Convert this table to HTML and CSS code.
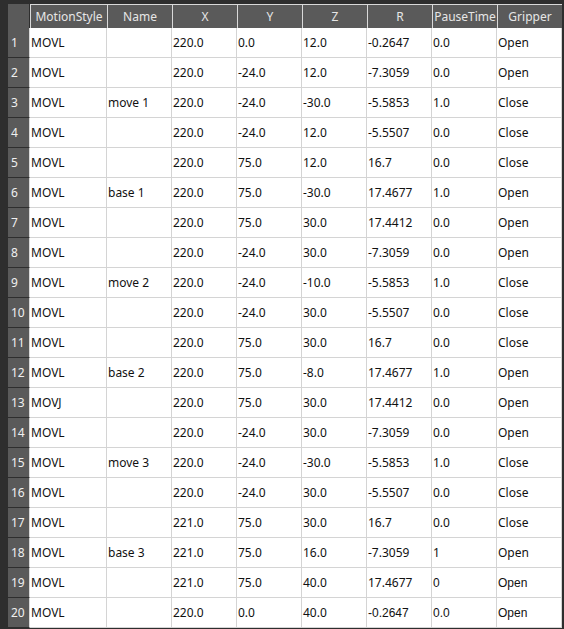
FILE: index.html
```html
<!DOCTYPE html>
<html>
<head>
<meta charset="utf-8">
<link rel="stylesheet" href="styles.css">
</head>
<body>
<div class="wrap">
  <div class="grid" id="grid">
    <div class="corner"></div>
    <div class="hd">MotionStyle</div>
    <div class="hd">Name</div>
    <div class="hd">X</div>
    <div class="hd">Y</div>
    <div class="hd">Z</div>
    <div class="hd">R</div>
    <div class="hd">PauseTime</div>
    <div class="hd">Gripper</div>

    <div class="rh">1</div><div class="c">MOVL</div><div class="c"></div><div class="c">220.0</div><div class="c">0.0</div><div class="c">12.0</div><div class="c">-0.2647</div><div class="c">0.0</div><div class="c">Open</div>
    <div class="rh">2</div><div class="c">MOVL</div><div class="c"></div><div class="c">220.0</div><div class="c">-24.0</div><div class="c">12.0</div><div class="c">-7.3059</div><div class="c">0.0</div><div class="c">Open</div>
    <div class="rh">3</div><div class="c">MOVL</div><div class="c">move 1</div><div class="c">220.0</div><div class="c">-24.0</div><div class="c">-30.0</div><div class="c">-5.5853</div><div class="c">1.0</div><div class="c">Close</div>
    <div class="rh">4</div><div class="c">MOVL</div><div class="c"></div><div class="c">220.0</div><div class="c">-24.0</div><div class="c">12.0</div><div class="c">-5.5507</div><div class="c">0.0</div><div class="c">Close</div>
    <div class="rh">5</div><div class="c">MOVL</div><div class="c"></div><div class="c">220.0</div><div class="c">75.0</div><div class="c">12.0</div><div class="c">16.7</div><div class="c">0.0</div><div class="c">Close</div>
    <div class="rh">6</div><div class="c">MOVL</div><div class="c">base 1</div><div class="c">220.0</div><div class="c">75.0</div><div class="c">-30.0</div><div class="c">17.4677</div><div class="c">1.0</div><div class="c">Open</div>
    <div class="rh">7</div><div class="c">MOVL</div><div class="c"></div><div class="c">220.0</div><div class="c">75.0</div><div class="c">30.0</div><div class="c">17.4412</div><div class="c">0.0</div><div class="c">Open</div>
    <div class="rh">8</div><div class="c">MOVL</div><div class="c"></div><div class="c">220.0</div><div class="c">-24.0</div><div class="c">30.0</div><div class="c">-7.3059</div><div class="c">0.0</div><div class="c">Open</div>
    <div class="rh">9</div><div class="c">MOVL</div><div class="c">move 2</div><div class="c">220.0</div><div class="c">-24.0</div><div class="c">-10.0</div><div class="c">-5.5853</div><div class="c">1.0</div><div class="c">Close</div>
    <div class="rh">10</div><div class="c">MOVL</div><div class="c"></div><div class="c">220.0</div><div class="c">-24.0</div><div class="c">30.0</div><div class="c">-5.5507</div><div class="c">0.0</div><div class="c">Close</div>
    <div class="rh">11</div><div class="c">MOVL</div><div class="c"></div><div class="c">220.0</div><div class="c">75.0</div><div class="c">30.0</div><div class="c">16.7</div><div class="c">0.0</div><div class="c">Close</div>
    <div class="rh">12</div><div class="c">MOVL</div><div class="c">base 2</div><div class="c">220.0</div><div class="c">75.0</div><div class="c">-8.0</div><div class="c">17.4677</div><div class="c">1.0</div><div class="c">Open</div>
    <div class="rh">13</div><div class="c">MOVJ</div><div class="c"></div><div class="c">220.0</div><div class="c">75.0</div><div class="c">30.0</div><div class="c">17.4412</div><div class="c">0.0</div><div class="c">Open</div>
    <div class="rh">14</div><div class="c">MOVL</div><div class="c"></div><div class="c">220.0</div><div class="c">-24.0</div><div class="c">30.0</div><div class="c">-7.3059</div><div class="c">0.0</div><div class="c">Open</div>
    <div class="rh">15</div><div class="c">MOVL</div><div class="c">move 3</div><div class="c">220.0</div><div class="c">-24.0</div><div class="c">-30.0</div><div class="c">-5.5853</div><div class="c">1.0</div><div class="c">Close</div>
    <div class="rh">16</div><div class="c">MOVL</div><div class="c"></div><div class="c">220.0</div><div class="c">-24.0</div><div class="c">30.0</div><div class="c">-5.5507</div><div class="c">0.0</div><div class="c">Close</div>
    <div class="rh">17</div><div class="c">MOVL</div><div class="c"></div><div class="c">221.0</div><div class="c">75.0</div><div class="c">30.0</div><div class="c">16.7</div><div class="c">0.0</div><div class="c">Close</div>
    <div class="rh">18</div><div class="c">MOVL</div><div class="c">base 3</div><div class="c">221.0</div><div class="c">75.0</div><div class="c">16.0</div><div class="c">-7.3059</div><div class="c">1</div><div class="c">Open</div>
    <div class="rh">19</div><div class="c">MOVL</div><div class="c"></div><div class="c">221.0</div><div class="c">75.0</div><div class="c">40.0</div><div class="c">17.4677</div><div class="c ar">0</div><div class="c ar">Open</div>
    <div class="rh">20</div><div class="c">MOVL</div><div class="c"></div><div class="c">220.0</div><div class="c">0.0</div><div class="c">40.0</div><div class="c ar">-0.2647</div><div class="c ar">0.0</div><div class="c ar">Open</div>
  </div>
</div>
</body>
</html>
```
FILE: styles.css
```css
html, body {
  margin: 0;
  padding: 0;
  background: #2e2e2e;
  height: 100%;
  overflow: hidden;
}
.wrap {
  padding: 4px 0 0 8px;
}
.grid {
  display: grid;
  grid-template-columns: 22px 77px repeat(7, 65px);
  grid-template-rows: 24px repeat(20, 30px);
  width: 554px;
  font-family: "Noto Sans", "Open Sans", sans-serif;
  font-size: 12px;
}
.grid > div {
  box-sizing: border-box;
  white-space: nowrap;
  overflow: hidden;
}
.corner {
  background: #5a5a5a;
  border-right: 1px solid #2e2e2e;
}
.hd {
  background: #5a5a5a;
  color: #e6e6e6;
  border-left: 1px solid #d9d9d9;
  border-top: 1px solid #d9d9d9;
  display: flex;
  align-items: center;
  justify-content: center;
  line-height: 1;
}
.rh {
  background: #5a5a5a;
  color: #f0f0f0;
  border-right: 1px solid #d9d9d9;
  border-bottom: 1px solid #2e2e2e;
  display: flex;
  align-items: center;
  padding-left: 3px;
  font-size: 12px;
}
.c {
  background: #ffffff;
  color: #111111;
  border-right: 1px solid #d4d4d4;
  border-bottom: 1px solid #d4d4d4;
  display: flex;
  align-items: center;
  padding-left: 1px;
}
.ar {
  font-family: "Liberation Sans", Arial, sans-serif;
}
```
